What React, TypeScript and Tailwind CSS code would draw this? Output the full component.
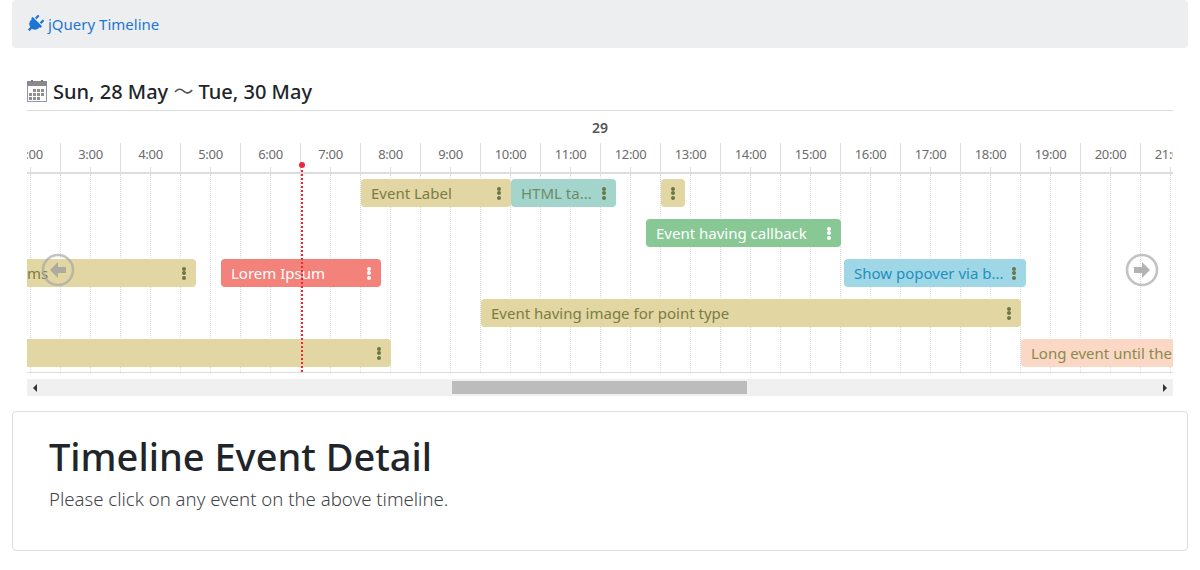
import { FaPlug } from "react-icons/fa";

const F = "[font-family:'Noto_Sans',sans-serif]";
const hours = Array.from({ length: 21 }, (_, i) => i + 2);
const lines = Array.from({ length: 40 }, (_, i) => i);

type Ev = { l: number; w: number; bg: string; fg: string; t?: string; dots?: boolean };
const rows: Ev[][] = [
  [
    { l: 334, w: 150, bg: "bg-[#e2d6a2]", fg: "text-[#7b7c45]", t: "Event Label", dots: true },
    { l: 484, w: 105, bg: "bg-[#a3d5cc]", fg: "text-[#6e8a66]", t: "HTML ta...", dots: true },
    { l: 634, w: 24, bg: "bg-[#e2d6a2]", fg: "text-[#7b7c45]", dots: true },
  ],
  [{ l: 619, w: 195, bg: "bg-[#87c895]", fg: "text-white", t: "Event having callback", dots: true }],
  [
    { l: -10, w: 179, bg: "bg-[#e2d6a2]", fg: "text-[#7b7c45]", t: "ms", dots: true },
    { l: 194, w: 160, bg: "bg-[#f2827a]", fg: "text-white", t: "Lorem Ipsum", dots: true },
    { l: 817, w: 182, bg: "bg-[#a0d7e7]", fg: "text-[#2190bd]", t: "Show popover via b...", dots: true },
  ],
  [{ l: 454, w: 540, bg: "bg-[#e2d6a2]", fg: "text-[#7b7c45]", t: "Event having image for point type", dots: true }],
  [
    { l: -10, w: 374, bg: "bg-[#e2d6a2]", fg: "text-[#7b7c45]", dots: true },
    { l: 994, w: 220, bg: "bg-[#fbd8c6]", fg: "text-[#8b8a4a]", t: "Long event until the end" },
  ],
];

const calendarCells: [number, number][] = [
  [6, 9], [10, 9], [14, 9],
  [2, 13], [6, 13], [10, 13], [14, 13],
  [2, 17], [6, 17], [10, 17],
];

function Dots({ white }: { white: boolean }) {
  return (
    <span className="flex flex-col gap-[0.5px] shrink-0">
      {[0, 1, 2].map((d) => (
        <span key={d} className={`w-[4px] h-[4px] rounded-full ${white ? "bg-white" : "bg-[#6b7647]"}`} />
      ))}
    </span>
  );
}

function Arrow({ right }: { right?: boolean }) {
  return (
    <svg width="34" height="34" viewBox="0 0 34 34" fill="none">
      <circle cx="17" cy="17" r="15" stroke="#a8a8a8" strokeOpacity="0.7" strokeWidth="2.6" />
      <g transform={right ? "" : "rotate(180 17 17)"}>
        <path d="M9 14h8V9l8 8-8 8v-5H9z" fill="#a0a0a0" fillOpacity="0.8" />
      </g>
    </svg>
  );
}

export default function App() {
  return (
    <div className={`${F} w-[1200px] h-[570px] px-3 bg-white overflow-hidden text-[#212529]`}>
      <nav className="h-[48px] rounded-[4px] bg-[#eceef0] flex items-center pl-4 gap-1 text-[#1f76d2] text-[15px]">
        <span className="w-4 flex items-center justify-center">
          <FaPlug className="text-[18px] rotate-45 shrink-0 -ml-[2px]" />
        </span>
        <span>jQuery Timeline</span>
      </nav>

      <div className="px-[15px] pt-[30px]">
        <div className="h-[28px] border-b border-[#dddddd] flex items-center gap-[6px] pb-[4px] box-content">
          <svg width="20" height="22" viewBox="0 0 20 22" className="shrink-0 -mt-[2px]">
            <rect x="0.5" y="1.5" width="19" height="20" fill="#ffffff" stroke="#8c9bb0" />
            <rect x="0" y="1" width="20" height="5" fill="#8a8a8a" />
            <rect x="4" y="0" width="2" height="2" fill="#777" />
            <rect x="14" y="0" width="2" height="2" fill="#777" />
            {calendarCells.map(([x, y]) => (
              <rect key={`${x}-${y}`} x={x} y={y} width="3" height="3" fill="#8f8f8f" />
            ))}
          </svg>
          <h2 className="text-[20px] font-medium whitespace-nowrap -mt-[2px]">
            Sun, 28 May <span className="[font-family:'Noto_Sans_CJK_JP',sans-serif] font-normal text-[#555]">〜</span> Tue, 30 May
          </h2>
        </div>

        <div className="relative w-[1146px] overflow-hidden">
          <div className="h-[32px] flex items-center justify-center text-[14px] font-semibold text-[#555] pt-[1px]">29</div>

          <div className="flex -ml-[26px] h-[29px] border-b-2 border-[#dddddd] box-content w-[1200px]">
            {hours.map((h) => (
              <div key={h} className="relative w-[60px] shrink-0 border-r border-[#dddddd] flex items-center justify-center text-[13px] text-[#6c6c6c] tracking-[-0.3px]">
                <span className="pb-[6px]">{h}:00</span>
                <span className="absolute left-[29px] bottom-0 h-[5px] w-px bg-[#dddddd]" />
              </div>
            ))}
          </div>

          <div className="relative border-b border-[#dddddd] pt-[5px] box-content h-[193px]">
            <div className="absolute inset-y-0 -left-[26px] flex">
              {lines.map((i) => (
                <div key={i} className="w-[30px] h-full shrink-0 border-r border-dotted border-[#dadada]" />
              ))}
            </div>
            {rows.map((row, ri) => (
              <div key={ri} className="relative h-[40px]">
                {row.map((e, i) => (
                  <div
                    key={i}
                    style={{ left: e.l, width: e.w }}
                    className={`absolute top-0 h-[28px] rounded-[4px] flex items-center justify-between pl-[10px] pr-[10px] text-[15px] whitespace-nowrap ${e.bg} ${e.fg}`}
                  >
                    <span>{e.t}</span>
                    {e.dots && <Dots white={e.fg === "text-white"} />}
                  </div>
                ))}
              </div>
            ))}
          </div>

          <div className="absolute left-[274px] top-[54px] w-[2px] h-[207px]">
            <span className="absolute -top-[3px] -left-[2px] w-[6px] h-[6px] rounded-full bg-[#ee2638]" />
            <span className="block w-0 h-full border-l-2 border-dotted border-[#ee2638]" />
          </div>
          <div className="absolute left-[14px] top-[142px]"><Arrow /></div>
          <div className="absolute left-[1098px] top-[142px]"><Arrow right /></div>
        </div>

        <div className="mt-[6px] h-[17px] bg-[#f0f0f0] flex items-center justify-between relative">
          <span className="ml-[6px] w-0 h-0 border-y-[4px] border-y-transparent border-r-[4px] border-r-[#333]" />
          <span className="absolute left-[425px] top-[2px] w-[295px] h-[13px] bg-[#bcbcbc]" />
          <span className="mr-[6px] w-0 h-0 border-y-[4px] border-y-transparent border-l-[4px] border-l-[#333]" />
        </div>
      </div>

      <section className="mt-[15px] h-[140px] rounded-[4px] border border-[#dfdfdf] pl-[36px] pt-[20px]">
        <h1 className="text-[38px] leading-[48px] font-medium text-[#212529]">Timeline Event Detail</h1>
        <p className="mt-[5px] text-[18.6px] leading-[28px] font-light text-[#3f4549]">Please click on any event on the above timeline.</p>
      </section>
    </div>
  );
}
